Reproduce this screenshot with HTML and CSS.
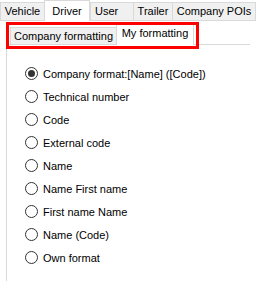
FILE: index.html
```html
<!DOCTYPE html>
<html>
<head>
<meta charset="utf-8">
<link rel="stylesheet" href="styles.css">
</head>
<body>
<div class="window">
  <div class="tabbar">
    <div class="tab t-vehicle">Vehicle</div>
    <div class="tab t-driver selected">Driver</div>
    <div class="tab t-user">User</div>
    <div class="tab t-trailer">Trailer</div>
    <div class="tab t-pois last">Company POIs</div>
  </div>
  <div class="page">
    <div class="subbar">
      <div class="subtab s-company">Company formatting</div>
      <div class="subtab s-mine selected">My formatting</div>
    </div>
    <div class="panel">
      <ul class="options">
        <li class="option"><span class="radio checked"></span><span>Company format:[Name] ([Code])</span></li>
        <li class="option"><span class="radio"></span><span>Technical number</span></li>
        <li class="option"><span class="radio"></span><span>Code</span></li>
        <li class="option"><span class="radio"></span><span>External code</span></li>
        <li class="option"><span class="radio"></span><span>Name</span></li>
        <li class="option"><span class="radio"></span><span>Name First name</span></li>
        <li class="option"><span class="radio"></span><span>First name Name</span></li>
        <li class="option"><span class="radio"></span><span>Name (Code)</span></li>
        <li class="option"><span class="radio"></span><span>Own format</span></li>
      </ul>
    </div>
    <div class="highlight"></div>
  </div>
</div>
</body>
</html>
```

FILE: styles.css
```css
html, body {
  margin: 0;
  padding: 0;
  background: #ffffff;
}

body {
  font-family: "Liberation Sans", Arial, sans-serif;
  font-size: 11px;
  color: #000000;
  width: 257px;
  height: 281px;
  overflow: hidden;
}

.window {
  position: relative;
}

/* outer tab strip */
.tabbar {
  display: flex;
  align-items: flex-end;
  height: 20px;
  width: 256px;
  border-bottom: 1px solid #d9d9d9;
}

.tab {
  box-sizing: border-box;
  height: 18px;
  background: #f0f0f0;
  border-top: 1px solid #d9d9d9;
  border-left: 1px solid #d9d9d9;
  text-align: center;
  line-height: 17px;
  white-space: nowrap;
}

.tab.last {
  border-right: 1px solid #d9d9d9;
}

.tab.selected {
  height: 21px;
  margin-bottom: -1px;
  background: #ffffff;
  border-right: 1px solid #d9d9d9;
  line-height: 20px;
  padding-bottom: 2px;
  position: relative;
  z-index: 1;
}

.t-vehicle { width: 44px; }
.t-driver  { width: 46px; }
.t-user    { width: 43px; text-align: left; padding-left: 4px; }
.t-trailer { width: 39px; }
.t-pois    { width: 84px; }

/* inner page */
.page {
  position: relative;
  padding-left: 6px;
}

.subbar {
  display: flex;
  align-items: flex-end;
  height: 23px;
  padding-left: 4px;
  border-bottom: 1px solid #d9d9d9;
  width: 240px;
}

.subtab {
  box-sizing: border-box;
  height: 17px;
  background: #f0f0f0;
  border-top: 1px solid #d9d9d9;
  border-left: 1px solid #d9d9d9;
  text-align: center;
  line-height: 17px;
  white-space: nowrap;
}

.subtab.selected {
  height: 21px;
  margin-bottom: -1px;
  background: #ffffff;
  border-right: 1px solid #d9d9d9;
  line-height: 17px;
  position: relative;
  z-index: 1;
}

.s-company { width: 106px; }
.s-mine    { width: 78px; }

.panel {
  border-left: 1px solid #d9d9d9;
  height: 236px;
}

.options {
  list-style: none;
  margin: 0;
  padding: 17px 0 0 18px;
}

.option {
  display: flex;
  align-items: center;
  gap: 5px;
  height: 23px;
  white-space: nowrap;
}

.radio {
  box-sizing: border-box;
  flex: none;
  width: 13px;
  height: 13px;
  border: 1px solid #333333;
  border-radius: 50%;
  background: #ffffff;
  display: flex;
  align-items: center;
  justify-content: center;
}

.radio.checked::after {
  content: "";
  width: 7px;
  height: 7px;
  border-radius: 50%;
  background: #333333;
}

/* red annotation frame */
.highlight {
  position: absolute;
  left: 6px;
  top: 1px;
  width: 193px;
  height: 27px;
  box-sizing: border-box;
  border: 3px solid #ff0000;
  z-index: 2;
}
```
